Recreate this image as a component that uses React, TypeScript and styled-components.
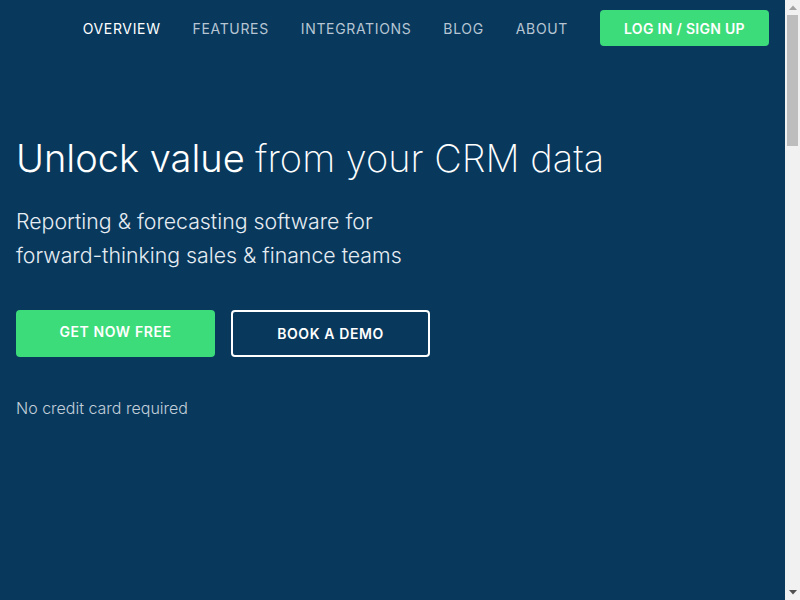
import React from "react";
import styled, { createGlobalStyle } from "styled-components";

const Global = createGlobalStyle`
  html, body, #root { margin: 0; padding: 0; }
  body {
    background: #08395d;
    font-family: "Inter", "Liberation Sans", sans-serif;
    color: #ffffff;
  }
`;

const Page = styled.div`
  min-height: 3000px;
  padding-right: 15px;
  background: #08395d;
`;

const Header = styled.header`
  display: flex;
  justify-content: flex-end;
  align-items: center;
  height: 56px;
  padding: 0 16px;
  box-sizing: border-box;
`;

const Nav = styled.nav`
  display: flex;
  align-items: center;
  gap: 32px;
  margin-right: 32px;
`;

const NavLink = styled.a<{ $active?: boolean }>`
  font-size: 14px;
  letter-spacing: 0.65px;
  font-weight: 400;
  color: ${(p) => (p.$active ? "#ffffff" : "#b7c5d3")};
  text-decoration: none;
  cursor: pointer;
`;

const LoginButton = styled.a`
  display: flex;
  align-items: center;
  justify-content: center;
  width: 169px;
  height: 36px;
  background: #3ddc7b;
  border-radius: 4px;
  color: #fff;
  font-size: 14px;
  font-weight: 600;
  letter-spacing: 0.3px;
  cursor: pointer;
`;

const Hero = styled.section`
  padding: 80px 16px 0;
`;

const Title = styled.h1`
  margin: 0;
  font-size: 38px;
  line-height: 44px;
  font-weight: 330;
`;

const Light = styled.span`
  font-weight: 250;
`;

const Subtitle = styled.p`
  margin: 24px 0 0;
  font-size: 21.3px;
  line-height: 34px;
  font-weight: 300;
  color: #e6ecf2;
`;

const Actions = styled.div`
  display: flex;
  gap: 16px;
  margin-top: 38px;
`;

const Button = styled.a<{ $outline?: boolean }>`
  display: flex;
  align-items: center;
  justify-content: center;
  box-sizing: border-box;
  width: 199px;
  height: 47px;
  border-radius: 4px;
  font-size: 14px;
  font-weight: 600;
  letter-spacing: 0.6px;
  color: #fff;
  cursor: pointer;
  background: ${(p) => (p.$outline ? "transparent" : "#3ddc7b")};
  border: ${(p) => (p.$outline ? "2px solid #ffffff" : "none")};
  padding-bottom: ${(p) => (p.$outline ? "0" : "4px")};
`;

const Note = styled.p`
  margin: 41px 0 0;
  font-size: 16px;
  font-weight: 300;
  color: #c3ced9;
`;

const ScrollTrack = styled.div`
  position: fixed;
  top: 0;
  right: 0;
  width: 15px;
  height: 100vh;
  background: #f1f1f1;
  display: flex;
  flex-direction: column;
  align-items: center;
`;

const ArrowBox = styled.div`
  height: 15px;
  width: 15px;
  display: flex;
  align-items: center;
  justify-content: center;
`;

const Thumb = styled.div`
  width: 11px;
  height: 131px;
  background: #bdbdbd;
`;

const Spacer = styled.div`
  flex: 1;
`;

export default function App() {
  return (
    <>
      <Global />
      <Page>
        <Header>
          <Nav>
            <NavLink $active>OVERVIEW</NavLink>
            <NavLink>FEATURES</NavLink>
            <NavLink>INTEGRATIONS</NavLink>
            <NavLink>BLOG</NavLink>
            <NavLink>ABOUT</NavLink>
          </Nav>
          <LoginButton>LOG IN / SIGN UP</LoginButton>
        </Header>
        <Hero>
          <Title>
            Unlock value <Light>from your CRM data</Light>
          </Title>
          <Subtitle>
            Reporting &amp; forecasting software for
            <br />
            forward-thinking sales &amp; finance teams
          </Subtitle>
          <Actions>
            <Button>GET NOW FREE</Button>
            <Button $outline>BOOK A DEMO</Button>
          </Actions>
          <Note>No credit card required</Note>
        </Hero>
      </Page>
      <ScrollTrack aria-hidden>
        <ArrowBox>
          <svg width="8" height="5" viewBox="0 0 8 5">
            <polygon points="0,5 8,5 4,0.5" fill="#a3a3a3" />
          </svg>
        </ArrowBox>
        <Thumb />
        <Spacer />
        <ArrowBox>
          <svg width="8" height="5" viewBox="0 0 8 5">
            <polygon points="0,0 8,0 4,4.5" fill="#505050" />
          </svg>
        </ArrowBox>
      </ScrollTrack>
    </>
  );
}
